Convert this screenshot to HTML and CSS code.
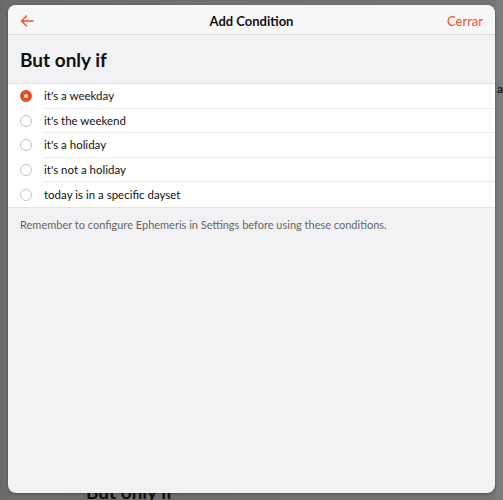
FILE: index.html
```html
<!DOCTYPE html>
<html>
<head>
<meta charset="utf-8">
<link rel="stylesheet" href="styles.css">
</head>
<body>
<div class="underlay">
  <span class="under-a">a</span>
  <span class="under-title">But only if</span>
</div>
<div class="modal">
  <div class="header">
    <svg class="back" width="14" height="12" viewBox="0 0 14 12"><path d="M13 6H1.5M6.5 1L1.5 6l5 5" fill="none" stroke="#f0502a" stroke-width="1.4" stroke-linecap="round" stroke-linejoin="round"/></svg>
    <div class="title">Add Condition</div>
    <div class="close">Cerrar</div>
  </div>
  <h1 class="section">But only if</h1>
  <ul class="list">
    <li class="row"><span class="radio checked"></span><span class="label">it's a weekday</span></li>
    <li class="row"><span class="radio"></span><span class="label">it's the weekend</span></li>
    <li class="row"><span class="radio"></span><span class="label">it's a holiday</span></li>
    <li class="row"><span class="radio"></span><span class="label">it's not a holiday</span></li>
    <li class="row"><span class="radio"></span><span class="label">today is in a specific dayset</span></li>
  </ul>
  <p class="note">Remember to configure Ephemeris in Settings before using these conditions.</p>
</div>
</body>
</html>
```
FILE: styles.css
```css
html, body {
  margin: 0;
  padding: 0;
}
body {
  width: 503px;
  height: 500px;
  background: #707070;
  font-family: "Lato", "Noto Sans", sans-serif;
  position: relative;
  overflow: hidden;
  padding: 5px 8px 0 8px;
  box-sizing: border-box;
}
.underlay {
  position: absolute;
  inset: 0;
  background: linear-gradient(to right, #686868 0, #6c6c6c 8px, #747474 495px, #7c7c7c 496px);
}
.under-a {
  position: absolute;
  left: 497px;
  top: 81px;
  font-size: 12px;
  font-weight: 700;
  color: #1a1a1a;
}
.under-title {
  position: absolute;
  left: 86px;
  top: 480px;
  font-size: 19px;
  font-weight: 700;
  color: #111;
}
.modal {
  position: relative;
  width: 487px;
  height: 488px;
  background: #f2f2f4;
  border-radius: 8px;
  overflow: hidden;
  box-shadow: 0 1px 3px rgba(0,0,0,0.3);
}
.header {
  height: 27px;
  background: #f7f7f8;
  border-bottom: 1px solid #dcdcde;
  display: flex;
  align-items: center;
  justify-content: space-between;
  padding: 2px 12px 0 12px;
  position: relative;
}
.back {
  display: block;
}
.title {
  position: absolute;
  left: 0;
  right: 0;
  text-align: center;
  font-size: 13px;
  font-weight: 700;
  color: #111;
  pointer-events: none;
}
.close {
  font-size: 13px;
  color: #f0502a;
}
.section {
  margin: 0;
  padding: 12px 12px 11px;
  font-size: 19px;
  font-weight: 700;
  color: #111;
  line-height: 25px;
}
.list {
  list-style: none;
  margin: 0;
  padding: 0;
  background: #fff;
  border-top: 1px solid #e4e4e6;
  border-bottom: 1px solid #e4e4e6;
}
.row {
  display: flex;
  align-items: center;
  height: 24.6px;
  padding-left: 12px;
}
.radio {
  width: 10px;
  height: 10px;
  border-radius: 50%;
  border: 1px solid #c4c4c6;
  box-sizing: content-box;
  flex: none;
}
.radio.checked {
  width: 4px;
  height: 4px;
  border: 4px solid #ec4a1f;
  background: #fff;
}
.label {
  margin-left: 12px;
  flex: 1;
  height: 100%;
  display: flex;
  align-items: center;
  font-size: 11.5px;
  color: #111;
  border-bottom: 1px solid #ececee;
  box-sizing: border-box;
}
.row:last-child .label {
  border-bottom: none;
}
.note {
  margin: 0;
  padding: 10px 12px;
  font-size: 11px;
  color: #666;
}
```
